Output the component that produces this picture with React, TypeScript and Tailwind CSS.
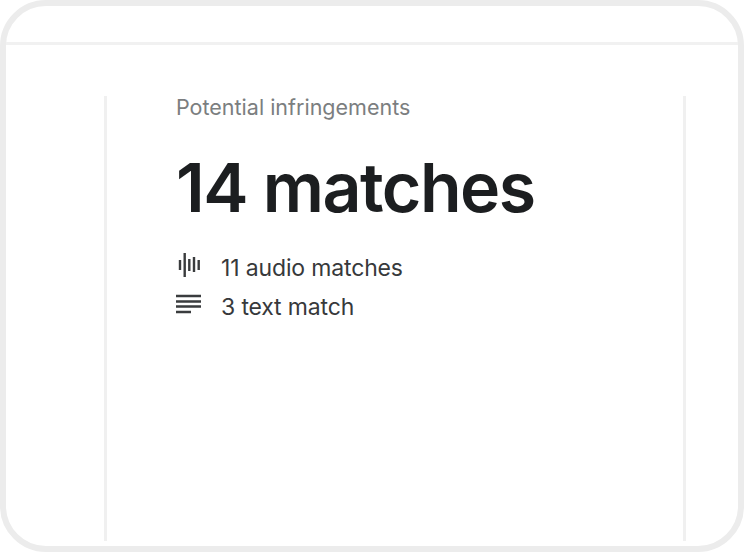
export default function App() {
  return (
    <div className="h-[552px] w-[744px] bg-white font-['Inter',sans-serif]">
      <div className="flex h-full flex-col rounded-[46px] border-[6px] border-[#ececec]">
        <div className="h-[39px] shrink-0 border-b-[3px] border-[#f1f1f1]" />
        <div className="flex-1 pt-[51px] pr-[52px] pb-[5px] pl-[98px]">
          <div className="h-full border-x-[3px] border-[#f0f0f0] pl-[69px]">
            <p className="text-[21.5px] leading-[22px] text-[#7b7e80]">Potential infringements</p>
            <h1 className="mt-[29px] text-[68px] leading-[80px] font-semibold tracking-[-1.5px] text-[#1c1e20]">14 matches</h1>
            <div className="mt-[22px] flex h-[39px] items-center gap-[20px]">
              <svg className="w-[25px] shrink-0 translate-x-px -translate-y-[4px]" width="25" height="26" viewBox="0 0 25 26" fill="none" stroke="#3a3c3e" strokeWidth="2.4">
                <path d="M3 8v10M7.7 1v24M12.3 7v12M17 5v15M21.7 8v10" />
              </svg>
              <span className="text-[23px] tracking-[-0.15px] text-[#37393b]">11 audio matches</span>
            </div>
            <div className="flex h-[39px] items-center gap-[20px]">
              <svg className="w-[25px] shrink-0 -translate-y-[4px]" width="25" height="20" viewBox="0 0 25 20" fill="none" stroke="#3a3c3e" strokeWidth="2.4">
                <path d="M0 2h25M0 7.5h25M0 12.5h25M0 18h15" />
              </svg>
              <span className="text-[23px] tracking-[-0.15px] text-[#37393b]">3 text match</span>
            </div>
          </div>
        </div>
      </div>
    </div>
  );
}
